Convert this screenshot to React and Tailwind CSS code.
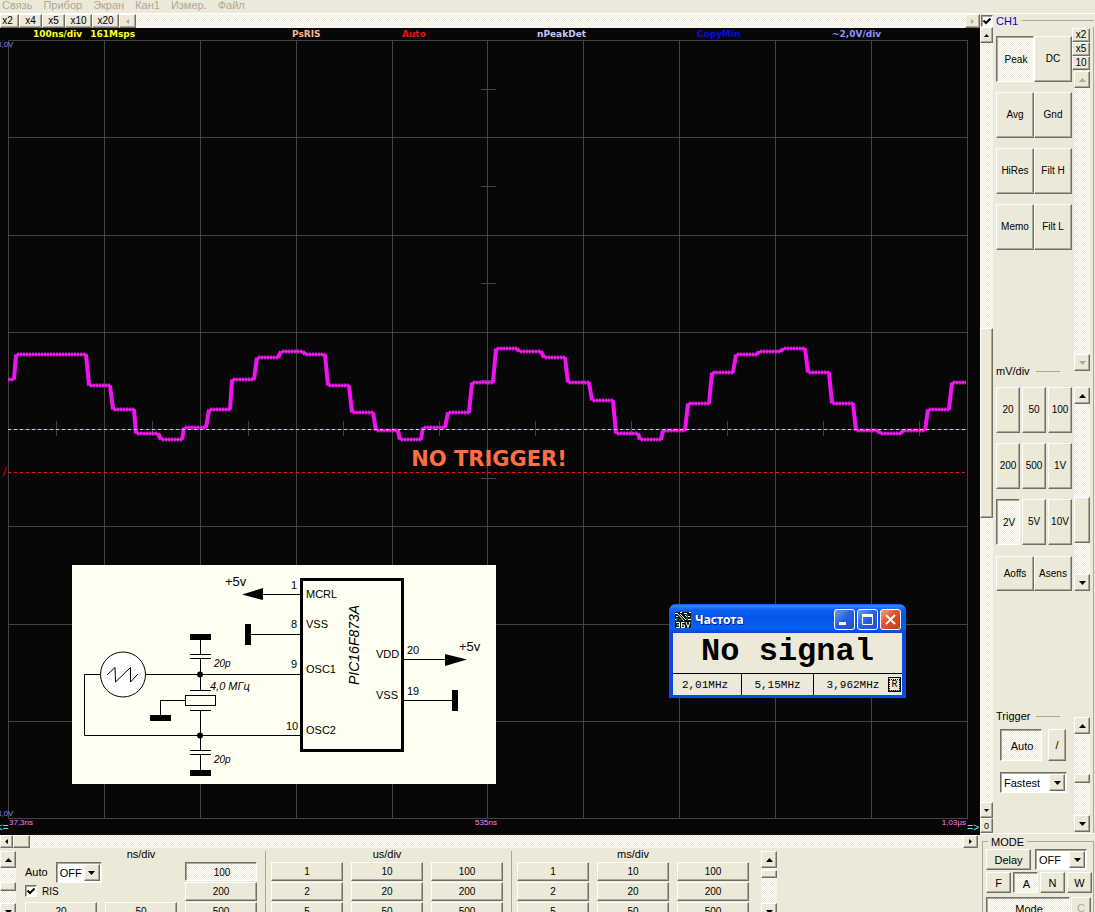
import React from "react";

const DITHER =
  "bg-[repeating-conic-gradient(#ffffff_0_25%,#ece9d8_0_50%)] bg-[length:2px_2px]";
const RAISED =
  "border border-t-white border-l-white border-b-[#716f64] border-r-[#716f64] bg-[#ece9d8] shadow-[inset_-1px_-1px_0_#aca899]";
const SUNKEN =
  "border border-t-[#716f64] border-l-[#716f64] border-b-white border-r-white shadow-[inset_1px_1px_0_#aca899]";

function Btn({ children, pressed, className = "", ...rest }) {
  return (
    <button
      type="button"
      aria-pressed={pressed}
      className={`flex items-center justify-center leading-3 whitespace-nowrap ${
        pressed ? `${SUNKEN} ${DITHER} pt-[2px] pl-[2px]` : RAISED
      } ${className}`}
      {...rest}
    >
      {children}
    </button>
  );
}

const ARROWS = {
  up: "M0 4H7L3.5 0Z",
  down: "M0 0H7L3.5 4Z",
  left: "M4 0V7L0 3.5Z",
  right: "M0 0V7L4 3.5Z",
};

function Arrow({ dir, muted, small }) {
  const vertical = dir === "up" || dir === "down";
  const size = small
    ? vertical ? "w-[5px] h-[3px]" : "w-[3px] h-[5px]"
    : vertical ? "w-[7px] h-[4px]" : "w-[4px] h-[7px]";
  return (
    <svg className={size} viewBox={vertical ? "0 0 7 4" : "0 0 4 7"} aria-hidden="true">
      <path d={ARROWS[dir]} fill={muted ? "#aca899" : "#000"} />
    </svg>
  );
}

function VScroll({ label, spacer, thumb, muted, className = "" }) {
  return (
    <div className={`flex w-4 flex-col ${DITHER} ${className}`}>
      <Btn aria-label={`${label} up`} disabled={muted} className="h-[17px] shrink-0">
        <Arrow dir="up" muted={muted} />
      </Btn>
      <div className={spacer} />
      {thumb && <div className={`${RAISED} ${thumb} shrink-0`} />}
      <div className="flex-1" />
      <Btn aria-label={`${label} down`} disabled={muted} className="h-[17px] shrink-0">
        <Arrow dir="down" muted={muted} />
      </Btn>
    </div>
  );
}

function Select({ label, value, options, className = "" }) {
  return (
    <div className={`relative h-[21px] ${SUNKEN} bg-white ${className}`}>
      <select
        aria-label={label}
        defaultValue={value}
        className="h-full w-full appearance-none bg-transparent pl-[3px] text-[11px] leading-4 outline-none"
      >
        {options.map((o) => (
          <option key={o}>{o}</option>
        ))}
      </select>
      <span
        className={`pointer-events-none absolute top-px right-px bottom-px flex w-4 items-center justify-center ${RAISED}`}
      >
        <Arrow dir="down" />
      </span>
    </div>
  );
}

function Check({ label, id }) {
  return (
    <span className={`relative flex h-3 w-3 items-center justify-center bg-white ${SUNKEN}`}>
      <input
        id={id}
        type="checkbox"
        aria-label={label}
        defaultChecked
        className="peer absolute inset-0 appearance-none"
      />
      <svg className="pointer-events-none hidden h-2 w-2 peer-checked:block" viewBox="0 0 8 8">
        <path d="M0.5 3.5L3 6L7.5 1.5" fill="none" stroke="#000" strokeWidth="2" />
      </svg>
    </span>
  );
}

function SideLabel({ children }) {
  return (
    <div className="flex h-3 items-center gap-[6px] text-[11px] leading-3 whitespace-nowrap">
      {children}
      <span className="mr-[12px] h-px flex-1 bg-[#aca899]" />
    </div>
  );
}

const STEPS = [
  [8, 14, 379], [17, 86, 354], [90, 110, 385], [114, 134, 409], [137, 158, 433],
  [162, 182, 439], [185, 206, 427], [210, 230, 409], [233, 254, 379], [258, 278, 357],
  [282, 303, 351], [306, 325, 354], [329, 349, 385], [353, 373, 412], [377, 398, 430],
  [401, 421, 439], [424, 445, 427], [449, 469, 412], [473, 493, 382], [497, 517, 348],
  [520, 541, 351], [545, 565, 357], [569, 589, 382], [593, 613, 400], [617, 638, 433],
  [641, 661, 439], [664, 685, 430], [689, 709, 403], [713, 733, 372], [737, 757, 354],
  [760, 781, 351], [784, 805, 348], [809, 829, 372], [833, 853, 403], [857, 878, 430],
  [881, 901, 433], [904, 925, 430], [929, 949, 409], [953, 966, 382],
];
const TRACE = "M" + STEPS.map(([a, b, y]) => `${a} ${y}L${b} ${y}`).join("L");
const FLATS = STEPS.map(([a, b, y]) => `M${a} ${y}H${b}`).join("");
const RISERS = STEPS.slice(1)
  .map(([a, , y], i) => `M${STEPS[i][1]} ${STEPS[i][2]}L${a - 1} ${y}`)
  .join("");
const GRID_X = [8, 104, 200, 296, 392, 487, 583, 679, 775, 871, 967];
const GRID_Y = [40, 137, 235, 332, 429, 526, 624, 721, 818];
const TICK_X = [56, 152, 248, 343, 439, 535, 631, 727, 823, 919];
const TICK_Y = [89, 186, 283, 380, 478, 575, 672, 770];

function Plot() {
  const grid =
    GRID_X.map((x) => `M${x + 0.5} 40V819`).join("") +
    GRID_Y.map((y) => `M8 ${y + 0.5}H968`).join("") +
    TICK_X.map((x) => `M${x + 0.5} 421V436`).join("") +
    TICK_Y.map((y) => `M481 ${y + 0.5}H496`).join("");
  return (
    <svg
      className="absolute inset-0 h-full w-full"
      viewBox="0 28 980 807"
      preserveAspectRatio="none"
      fill="none"
      aria-label="Waveform"
    >
      <path d={grid} stroke="#444444" />
      <g transform="translate(0 0.5)">
        <path d={TRACE} stroke="#ff10ff" strokeWidth="2" strokeLinejoin="round" />
        <path d={FLATS} stroke="#ee20ee" strokeWidth="4" strokeDasharray="2 1" strokeOpacity="0.75" />
        <path d={RISERS} stroke="#f012f0" strokeWidth="4" />
      </g>
      <path d="M8 429.5H967" stroke="#d2c8f0" strokeDasharray="3 3" />
      <path d="M8 472.5H967" stroke="#f01414" strokeDasharray="3 3" />
      <path d="M3.5 476L6.5 467" stroke="#d01010" />
    </svg>
  );
}

function Schematic() {
  return (
    <div className="absolute top-[537px] left-[72px] h-[219px] w-[424px] bg-[#fffff2]">
      <svg
        viewBox="72 565 424 219"
        className="h-full w-full font-['Liberation_Sans',sans-serif]"
        fill="none"
        stroke="#000"
        aria-label="Circuit diagram"
      >
        <circle cx="123" cy="674.5" r="22.5" fill="#fff" />
        <path d="M107 675L115 667.5L115.5 682L130.5 667.5L130.5 682L138 674" />
        <path d="M100 674.5H84.5V735.5H302M146 674.5H302" />
        <path d="M200.5 640V654M190 654.5H211M190 658.5H211M200.5 659V690M190 690.5H211M190 710.5H211M200.5 711V750M190 750.5H211M190 754.5H211M200.5 755V770M185 700.5H160.5V715" />
        <rect x="185.5" y="695.5" width="30" height="10" />
        <path d="M262 594.5H302M251 634.5H302M404 659.5H446M404 700.5H452" />
        <rect x="301.5" y="579.5" width="101" height="171" strokeWidth="3" />
        <g fill="#000" stroke="none">
          <path d="M190 634H211V640H190ZM150 715H171V721H150ZM190 770H211V776H190ZM245 624H251V645H245ZM452 690H458V711H452Z" />
          <path d="M242 594.5L263 588V600ZM467 659.5L445 654V666Z" />
          <circle cx="200" cy="674.5" r="3" />
          <circle cx="200" cy="735.5" r="3" />
          <g fontSize="13">
            <text x="225" y="586">+5v</text>
            <text x="459" y="651">+5v</text>
          </g>
          <g fontSize="11">
            <text x="291" y="589">1</text>
            <text x="291" y="628">8</text>
            <text x="291" y="668">9</text>
            <text x="286" y="730">10</text>
            <text x="407" y="654">20</text>
            <text x="407" y="695">19</text>
            <text x="306" y="598">MCRL</text>
            <text x="306" y="628">VSS</text>
            <text x="306" y="673">OSC1</text>
            <text x="306" y="734">OSC2</text>
            <text x="376" y="658">VDD</text>
            <text x="376" y="699">VSS</text>
          </g>
          <g fontStyle="italic">
            <text x="210" y="690" fontSize="11">4,0 МГц</text>
            <text x="214" y="667" fontSize="10">20p</text>
            <text x="214" y="763" fontSize="10">20p</text>
            <text transform="translate(359 685) rotate(-90)" fontSize="14">PIC16F873A</text>
          </g>
        </g>
      </svg>
    </div>
  );
}

const XP_BTN =
  "flex h-[21px] w-[21px] items-center justify-center rounded-[3px] border border-white";

function FrequencyWindow() {
  return (
    <section
      aria-label="Частота"
      className="absolute top-[576px] left-[669px] flex w-[237px] flex-col rounded-t-[7px] bg-[#0a4be0] px-1 pb-[3px] text-black"
    >
      <header className="-mx-1 flex h-[29px] items-center rounded-t-[7px] bg-[linear-gradient(#0a5cf0,#2f8bff_2px,#0a5ef2_6px,#0455e6_14px,#0562f8_24px,#0347cf)] pr-[5px] pl-[6px] pt-[2px]">
        <svg className="h-4 w-4" viewBox="0 0 16 16" aria-hidden="true">
          <rect width="16" height="16" fill="#06140a" />
          <path d="M0 1.5H3M5 0.5H7M9 1.5H12M14 0.5H16M1 4.5H3M13 4.5H15M0 7.5H2M13 7.5H16" stroke="#fff" />
          <path d="M3 2L9 9M5 2L11 8M10 3L12 5" stroke="#fff" />
          <path d="M2 6V9M5 7V9M12 2V8" stroke="#16b03c" />
          <path d="M1 10.5H4.5V15.5H1M2 13H4M9.5 10.5H6.5V15.5H9.5V13H7M11 10L13 15.5L15 10" stroke="#fff" fill="none" />
        </svg>
        <h2 className="flex-1 pl-1 font-['Noto_Sans',sans-serif] text-[12px] leading-4 font-bold text-white [text-shadow:1px_1px_0_#0a1883]">
          Частота
        </h2>
        <div className="flex gap-[2px]">
          <button type="button" aria-label="Minimize" className={`${XP_BTN} bg-[linear-gradient(135deg,#6c9cf8,#2560e0_50%,#1c50cc)]`}>
            <svg className="h-[15px] w-[15px]" viewBox="0 0 15 15"><path d="M2 11.5H9" stroke="#fff" strokeWidth="3" /></svg>
          </button>
          <button type="button" aria-label="Maximize" className={`${XP_BTN} bg-[linear-gradient(135deg,#6c9cf8,#2560e0_50%,#1c50cc)]`}>
            <svg className="h-[15px] w-[15px]" viewBox="0 0 15 15"><path d="M2.5 3V12.5H12.5V3" stroke="#fff" fill="none" /><path d="M2 3.5H13" stroke="#fff" strokeWidth="3" /></svg>
          </button>
          <button type="button" aria-label="Close" className={`${XP_BTN} bg-[linear-gradient(135deg,#f0a080,#e0512c_45%,#c83c14)]`}>
            <svg className="h-[15px] w-[15px]" viewBox="0 0 15 15"><path d="M3 3L12 12M12 3L3 12" stroke="#fff" strokeWidth="2" /></svg>
          </button>
        </div>
      </header>
      <div className="bg-[#ece9d8] font-['Liberation_Mono',monospace]">
        <p className="flex h-10 items-center justify-center pb-[3px] text-[32px] leading-9 font-bold">
          No signal
        </p>
        <div className="flex h-[22px] items-stretch border-t border-black text-[11px] leading-4">
          <span className="flex w-[69px] items-center justify-center border-r border-black pr-1">2,01MHz</span>
          <span className="flex w-[72px] items-center justify-center border-r border-black">5,15MHz</span>
          <span className="flex flex-1 items-center justify-center pl-1">3,962MHz</span>
          <Btn className="my-[3px] mr-[1px] w-[13px] border-black! text-[10px]">
            <span className="border border-dotted border-black px-px leading-[10px]">R</span>
          </Btn>
        </div>
      </div>
    </section>
  );
}

function Scope() {
  return (
    <main className="relative min-h-0 flex-1 overflow-hidden bg-[#070707] font-['Liberation_Sans',sans-serif]">
      <Plot />
      <div className="relative grid grid-cols-[259fr_110fr_135fr_160fr_135fr_148fr] pl-[33px] font-['DejaVu_Sans',sans-serif] text-[9px] leading-3 font-bold whitespace-pre">
        <span className="flex gap-2 text-[#ffff20]">
          <span>100ns/div</span>
          <span>161Msps</span>
        </span>
        <span className="text-[#ffb888]">PsRIS</span>
        <span className="text-[#f01010]">Auto</span>
        <span className="text-[#c8c8ff]">nPeakDet</span>
        <span className="text-[#0808f0]">CopyMin</span>
        <span className="text-[#9090ff]">~2,0V/div</span>
      </div>
      <p className="absolute top-[417px] right-0 left-0 pr-[2px] text-center font-['DejaVu_Sans',sans-serif] text-[21px] leading-7 font-bold text-[#ff7040]">
        NO TRIGGER!
      </p>
      <div className="text-[8px] leading-[10px]">
        <span className="absolute top-3 -left-[3px] text-[#8080f0]">8,0V</span>
        <span className="absolute bottom-4 -left-[3px] text-[#8080f0]">8,0V</span>
        <span className="absolute bottom-[7px] left-[9px] text-[#ff80f0]">37,3ns</span>
        <span className="absolute right-0 bottom-[7px] left-0 pr-2 text-center text-[#ff80f0]">535ns</span>
        <span className="absolute right-[14px] bottom-[7px] text-[#ff80f0]">1,03µs</span>
        <span className="absolute bottom-[2px] -left-[3px] text-[10px] text-[#50f0f0]">&lt;=</span>
        <span className="absolute right-px bottom-[2px] text-[10px] text-[#50f0f0]">=&gt;</span>
      </div>
      <Schematic />
      <FrequencyWindow />
    </main>
  );
}

function TimeGroup({ title, rows, blank, children, className = "" }) {
  return (
    <section className={`flex flex-col ${className}`}>
      <h3 className="pb-px text-center text-[11px] leading-[13px]">{title}</h3>
      <div className="relative grid grid-cols-3 gap-x-2 gap-y-px text-[10px]">
        {children}
        {rows.flat().map((v, i) =>
          v === null ? (
            <span key={i} />
          ) : (
            <Btn key={i} pressed={blank && v === "100"} className="h-[19px]">
              {v}
            </Btn>
          )
        )}
      </div>
    </section>
  );
}

function TimePanel() {
  return (
    <div className="flex h-16 shrink-0 overflow-hidden">
      <VScroll label="Time base" spacer="h-[14px]" thumb="h-[9px]" className="mt-[3px] h-[69px]" />
      <TimeGroup
        title="ns/div"
        blank
        rows={[[null, null, "100"], [null, null, "200"], ["20", "50", "500"]]}
        className="w-[249px] pr-2 pl-[9px]"
      >
        <div className="absolute top-0 left-0 flex w-40 flex-col">
          <div className="flex items-center gap-[8px] text-[11px]">
            Auto
            <Select label="Auto" value="OFF" options={["OFF", "ON"]} className="w-[46px]" />
          </div>
          <div className="flex h-4 items-center gap-[5px]">
            <Check id="ris" label="RIS" />
            <label htmlFor="ris">RIS</label>
          </div>
        </div>
      </TimeGroup>
      <TimeGroup
        title="us/div"
        rows={[["1", "10", "100"], ["2", "20", "200"], ["5", "50", "500"]]}
        className="mt-[3px] w-[246px] border-l border-[#aca899] pr-2 pl-[5px] *:first:-mt-[3px]"
      />
      <TimeGroup
        title="ms/div"
        rows={[["1", "10", "100"], ["2", "20", "200"], ["5", "50", "500"]]}
        className="mt-[3px] w-[246px] border-l border-[#aca899] pr-2 pl-[5px] *:first:-mt-[3px]"
      />
      <VScroll label="Range" spacer="h-[2px]" thumb="h-[8px]" className="mt-[3px] ml-1 h-[69px]" />
    </div>
  );
}

const COUPLING = ["Peak", "DC", "Avg", "Gnd", "HiRes", "Filt H", "Memo", "Filt L"];
const RANGES = ["20", "50", "100", "200", "500", "1V", "2V", "5V", "10V"];

function ChannelPanel() {
  return (
    <div className="flex min-h-0 flex-1 flex-col border-b border-white">
      <div className="flex h-[13px] shrink-0 items-center pl-px">
        <Check id="ch1" label="CH1" />
        <label htmlFor="ch1" className="pr-1 pl-[3px] text-[11px] leading-3 text-[#0000d8]">CH1</label>
        <span className="mr-px h-px flex-1 bg-[#aca899]" />
      </div>
      <div className="flex min-h-0 flex-1">
        <div className={`flex w-[13px] flex-col ${DITHER}`}>
          <Btn aria-label="Offset up" className="h-4"><Arrow dir="up" small /></Btn>
          <div className="grow-[285]" />
          <div className={`h-[190px] ${RAISED}`} />
          <div className="grow-[285]" />
          <Btn aria-label="Offset down" className="h-4"><Arrow dir="down" small /></Btn>
          <Btn aria-label="Zero offset" className="h-[15px] text-[9px]">0</Btn>
        </div>
        <div className="mr-px flex flex-1 flex-col border-r border-[#aca899] pl-[3px] text-[10px]">
          <div className="flex h-[350px]">
            <div className="flex w-[76px] flex-col pt-[9px]">
              <div className="grid grid-cols-2 gap-y-[10px]">
                {COUPLING.map((c) => (
                  <Btn key={c} pressed={c === "Peak"} className="h-[46px]">{c}</Btn>
                ))}
              </div>
              <div className="mt-auto"><SideLabel>mV/div</SideLabel></div>
            </div>
            <div className="flex w-[18px] flex-col pt-px pb-[6px]">
              {["x2", "x5", "10"].map((c) => (
                <Btn key={c} className="h-[14px]">{c}</Btn>
              ))}
              <VScroll label="Zoom" muted spacer="" className="mt-px ml-[2px] flex-1" />
            </div>
          </div>
          <div className="mt-[10px] flex">
            <div className="flex w-[76px] flex-col gap-[11px]">
              <div className="grid grid-cols-3 gap-x-[2px] gap-y-[10px]">
                {RANGES.map((c) => (
                  <Btn key={c} pressed={c === "2V"} className="h-[46px]">{c}</Btn>
                ))}
              </div>
              <div className="grid grid-cols-2">
                <Btn className="h-[35px]">Aoffs</Btn>
                <Btn className="h-[35px]">Asens</Btn>
              </div>
            </div>
            <VScroll label="Sensitivity" spacer="h-[93px]" thumb="h-[46px]" className="ml-[2px]" />
          </div>
          <div className="mt-auto flex h-[123px] pb-px">
            <div className="flex w-[76px] flex-col text-[11px]">
              <SideLabel>Trigger</SideLabel>
              <div className="flex gap-[6px] pt-[7px] pl-1">
                <Btn pressed className="h-8 w-[42px]">Auto</Btn>
                <Btn aria-label="Rising edge" className="h-8 w-[18px]">/</Btn>
              </div>
              <div className="pt-[11px] pl-1">
                <Select label="Speed" value="Fastest" options={["Fastest", "Slow"]} className="w-[67px]" />
              </div>
            </div>
            <VScroll label="Trigger level" spacer="h-[40px]" thumb="h-[9px]" className="mt-[7px] ml-[2px]" />
          </div>
        </div>
      </div>
    </div>
  );
}

function ModePanel() {
  return (
    <section className="h-[78px] shrink-0 overflow-hidden pl-[2px] text-[11px]">
      <div className="flex h-[15px] items-center">
        <span className="h-px w-[6px] bg-[#aca899]" />
        <h3 className="px-[3px] leading-3">MODE</h3>
        <span className="mr-px h-px flex-1 bg-[#aca899]" />
      </div>
      <div className="-mt-[7px] mr-px flex h-[80px] flex-col gap-[2px] border-x border-[#aca899] pt-[7px] pl-[3px]">
        <div className="flex gap-1">
          <Btn className="h-[21px] w-[45px]">Delay</Btn>
          <Select label="Delay" value="OFF" options={["OFF", "ON"]} className="w-[52px]" />
        </div>
        <div className="flex gap-[2px]">
          {["F", "A", "N", "W"].map((m) => (
            <Btn key={m} pressed={m === "A"} className="h-[21px] w-[25px]">{m}</Btn>
          ))}
        </div>
        <div className="flex gap-px pt-[2px]">
          <Btn pressed className="h-[22px] w-[84px]">Mode</Btn>
          <Btn disabled className="h-[22px] w-5 text-[#aca899]">C</Btn>
        </div>
      </div>
    </section>
  );
}

export default function App() {
  return (
    <div className="flex h-screen flex-col overflow-hidden bg-[#ece9d8] font-['Liberation_Sans',sans-serif] text-black">
      <nav className="flex h-[14px] shrink-0 items-end gap-[11px] border-b border-white pb-[2px] pl-[2px] text-[11px] leading-3 text-[#aca899]">
        {["Связь", "Прибор", "Экран", "Кан1", "Измер.", "Файл"].map((m) => (
          <a key={m} href="#">{m}</a>
        ))}
      </nav>
      <div className="flex min-h-0 flex-1">
        <div className="flex min-w-0 flex-1 flex-col">
          <div className={`flex h-[14px] shrink-0 text-[10px] ${DITHER}`}>
            <Btn className="w-[19px] pr-1">x2</Btn>
            <Btn className="w-[23px]">x4</Btn>
            <Btn className="w-[23px]">x5</Btn>
            <Btn className="w-[27px]">x10</Btn>
            <Btn className="w-[27px]">x20</Btn>
            <Btn aria-label="Scroll left" disabled className="w-[17px]"><Arrow dir="left" small muted /></Btn>
            <div className="flex-1" />
            <Btn aria-label="Scroll right" disabled className="w-[15px]"><Arrow dir="right" small muted /></Btn>
          </div>
          <Scope />
          <div className={`mr-[2px] flex h-[13px] shrink-0 ${DITHER}`}>
            <Btn aria-label="Pan left" className="w-[13px]"><Arrow dir="left" small /></Btn>
            <div className={`w-[17px] ${RAISED}`} />
            <div className="flex-1" />
            <Btn aria-label="Pan right" className="w-[15px]"><Arrow dir="right" small /></Btn>
          </div>
          <TimePanel />
        </div>
        <aside className="flex w-[115px] shrink-0 flex-col">
          <ChannelPanel />
          <ModePanel />
        </aside>
      </div>
    </div>
  );
}
